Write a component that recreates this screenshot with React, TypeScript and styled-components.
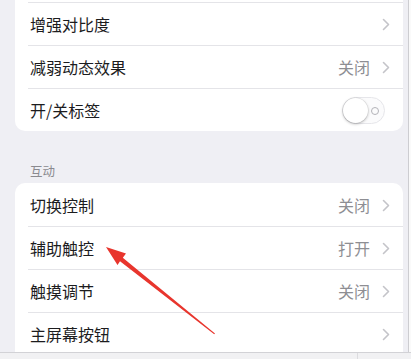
import React from "react";
import styled, { createGlobalStyle } from "styled-components";

const Global = createGlobalStyle`
  html, body { margin: 0; padding: 0; background: #ffffff; }
  * { box-sizing: border-box; }
`;

const Screen = styled.div`
  position: relative;
  width: 411px;
  height: 359px;
  overflow: hidden;
  display: grid;
  grid-template-rows: 1fr 7px;
  background: #fafafa;
  font-family: "Noto Sans CJK SC", "Noto Sans", sans-serif;
`;

const Main = styled.div`
  display: flex;
  min-height: 0;
  overflow: hidden;
`;

const Content = styled.div`
  width: 409px;
  background: #efeff4;
  border-right: 1px solid #cdcdd1;
  padding: 0 5px 0 15px;
  overflow: hidden;
`;

const BottomBar = styled.div`
  border-top: 1px solid #d2d2d6;
  background: #f1f1f3;
  display: flex;
  justify-content: flex-end;
  padding-right: 53px;
`;

const BarTick = styled.div`
  width: 1px;
  background: #dcdcdf;
`;

const Card = styled.div<{ $top?: boolean; $bottom?: boolean }>`
  background: #ffffff;
  border-radius: ${(p) => (p.$top ? "10px" : "0")} ${(p) => (p.$top ? "10px" : "0")}
    ${(p) => (p.$bottom ? "10px" : "0")} ${(p) => (p.$bottom ? "10px" : "0")};
  padding-top: ${(p) => (p.$top ? "0" : "2px")};
`;

const Row = styled.div<{ $first?: boolean }>`
  position: relative;
  height: 43px;
  display: flex;
  align-items: center;
  padding: 0 13px 0 15px;
  border-top: 1px solid transparent;
  &::before {
    content: "";
    display: ${(p) => (p.$first ? "none" : "block")};
    position: absolute;
    top: -1px;
    left: 13px;
    right: 0;
    height: 1px;
    background: #e4e4e8;
  }
`;

const Label = styled.span`
  flex: 1;
  font-size: 16px;
  color: #1c1c1e;
  line-height: 20px;
`;

const Value = styled.span`
  font-size: 16px;
  color: #8e8e93;
  line-height: 20px;
  margin-right: 12px;
`;

const Chevron = styled.svg`
  width: 8px;
  height: 13px;
  flex: none;
`;

const SectionHeader = styled.div`
  font-size: 12.5px;
  color: #8a8a8f;
  line-height: 16px;
  padding: 32px 0 4px 15px;
`;

const Toggle = styled.div`
  position: relative;
  width: 43px;
  height: 27px;
  border-radius: 14px;
  background: #fbfbfc;
  border: 1px solid #e6e6ea;
  margin-right: 5px;
`;

const Knob = styled.div`
  position: absolute;
  left: 0;
  top: 0;
  width: 25px;
  height: 25px;
  border-radius: 50%;
  background: #ffffff;
  box-shadow: 0 1px 3px rgba(0, 0, 0, 0.28), 0 0 0 0.5px rgba(0, 0, 0, 0.08);
`;

const OffMark = styled.div`
  position: absolute;
  right: 5px;
  top: 9px;
  width: 8px;
  height: 8px;
  border-radius: 50%;
  border: 1.2px solid #b3b3b8;
`;

const ArrowLayer = styled.svg`
  position: absolute;
  left: 0;
  top: 0;
  pointer-events: none;
`;

const ChevronIcon = () => (
  <Chevron viewBox="0 0 8 13">
    <path d="M1.5 1.5 L6.5 6.5 L1.5 11.5" fill="none" stroke="#c4c4c9" strokeWidth="1.6" strokeLinecap="round" strokeLinejoin="round" />
  </Chevron>
);

type Item = { label: string; value?: string; toggle?: boolean; chevron?: boolean };

const display: Item[] = [
  { label: "增强对比度", chevron: true },
  { label: "减弱动态效果", value: "关闭", chevron: true },
  { label: "开/关标签", toggle: true },
];

const interaction: Item[] = [
  { label: "切换控制", value: "关闭", chevron: true },
  { label: "辅助触控", value: "打开", chevron: true },
  { label: "触摸调节", value: "关闭", chevron: true },
  { label: "主屏幕按钮", chevron: true },
];

const Rows = ({ items, firstHasLine }: { items: Item[]; firstHasLine: boolean }) => (
  <>
    {items.map((it, i) => (
      <Row key={it.label} $first={i === 0 && !firstHasLine}>
        <Label>{it.label}</Label>
        {it.value && <Value>{it.value}</Value>}
        {it.chevron && <ChevronIcon />}
        {it.toggle && (
          <Toggle>
            <Knob />
            <OffMark />
          </Toggle>
        )}
      </Row>
    ))}
  </>
);

export default function App() {
  return (
    <>
      <Global />
      <Screen>
        <Main>
          <Content>
            <Card $bottom>
              <Rows items={display} firstHasLine />
            </Card>
            <SectionHeader>互动</SectionHeader>
            <Card $top>
              <Rows items={interaction} firstHasLine={false} />
            </Card>
          </Content>
        </Main>
        <BottomBar>
          <BarTick />
        </BottomBar>
        <ArrowLayer width="411" height="359" viewBox="0 0 411 359">
          <polygon
            points="106,247 126,253.5 122.8,257.8 215,333.5 214.2,334.2 120,261.2 117.5,265"
            fill="#e8352d"
          />
        </ArrowLayer>
      </Screen>
    </>
  );
}
